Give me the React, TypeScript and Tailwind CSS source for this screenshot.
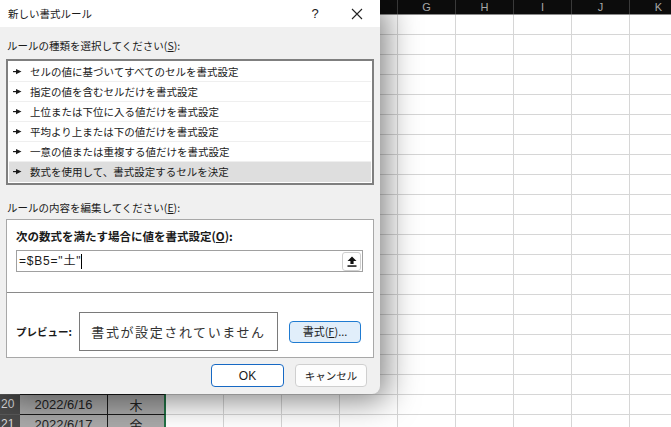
import React from 'react'

const cols = ['A', 'B', 'C', 'D', 'E', 'F', 'G', 'H', 'I', 'J', 'K']
const widths = [88, 58, 58, 58, 58, 58, 58, 58, 58, 58, 58]
const wd = ['日', '月', '火', '水', '木', '金', '土']

const rules = [
  'セルの値に基づいてすべてのセルを書式設定',
  '指定の値を含むセルだけを書式設定',
  '上位または下位に入る値だけを書式設定',
  '平均より上または下の値だけを書式設定',
  '一意の値または重複する値だけを書式設定',
  '数式を使用して、書式設定するセルを決定',
]

function Pointer() {
  return (
    <svg width="9" height="7" viewBox="0 0 9 7" className="shrink-0">
      <rect x="0" y="3" width="3.5" height="1.2" fill="#1a1a1a" />
      <path d="M3 1 L8.5 3.6 L3 6.2 Z" fill="#1a1a1a" />
    </svg>
  )
}

function Sheet() {
  const rows = Array.from({ length: 21 }, (_, i) => i + 1)
  return (
    <div className="absolute inset-0 bg-white font-['Liberation_Sans','Noto_Sans_CJK_JP',sans-serif]">
      <div className="flex h-[15px] bg-[#0c0c0c] border-b border-[#8a8a8a]">
        <div className="w-[20px] shrink-0" />
        {cols.map((c, i) => (
          <div
            key={c}
            style={{ width: widths[i] }}
            className="shrink-0 border-r border-[#3a3a3a] text-[11px] leading-[14px] text-center text-[#a8a8a8]"
          >
            {i >= 6 ? c : ''}
          </div>
        ))}
      </div>
      {rows.map((r) => {
        const data = r >= 5
        // only the rows below the dialog are visible
        const shown = r >= 20
        const day = r - 4
        return (
          <div key={r} className="flex h-[20px]">
            <div className="w-[20px] shrink-0 bg-[#4a4a4a] border-b border-[#5a5a5a] text-[12px] leading-[19px] text-[#dcdcdc] pl-[1px]">
              {shown ? r : ''}
            </div>
            {cols.map((c, i) => {
              if (data && i === 0)
                return (
                  <div key={c} className="w-[88px] shrink-0 bg-[#a9a9a9] border-r border-b border-[#1a1a1a] text-[13px] leading-[19px] text-center text-[#222]">
                    {shown ? `2022/6/${day}` : ''}
                  </div>
                )
              if (data && i === 1)
                return (
                  <div key={c} className="w-[58px] shrink-0 bg-[#a9a9a9] border-b border-[#1a1a1a] border-r-2 border-r-[#217346] text-[13px] leading-[19px] text-center text-[#222] font-['Noto_Sans_CJK_JP',sans-serif]">
                    {shown ? wd[(2 + day) % 7] : ''}
                  </div>
                )
              return (
                <div
                  key={c}
                  style={{ width: widths[i] }}
                  className="shrink-0 border-r border-b border-[#d6d6d6]"
                />
              )
            })}
          </div>
        )
      })}
    </div>
  )
}

function Dialog() {
  return (
    <div className="absolute left-0 top-0 w-[380px] h-[394px] bg-[#f0f0f0] rounded-br-[8px] shadow-[6px_6px_32px_rgba(0,0,0,0.5)] overflow-hidden font-['Noto_Sans_CJK_JP',sans-serif] text-[#1a1a1a]">
      <div className="h-[27px] bg-white flex items-center pl-[8px]">
        <span className="text-[10.5px]">新しい書式ルール</span>
        <span className="ml-auto w-[14px] text-center text-[13px] font-['Liberation_Sans',sans-serif]">?</span>
        <svg width="12" height="12" viewBox="0 0 12 12" className="ml-[29px] mr-[17px]">
          <path d="M1 1 L11 11 M11 1 L1 11" stroke="#222" strokeWidth="1.1" />
        </svg>
      </div>
      <div className="px-[6px]">
        <div className="pt-[11px] pl-[1px] h-[27px] text-[10.5px] leading-[16px]">
          ルールの種類を選択してください(<span className="underline">S</span>):
        </div>
        <div className="mt-[5px] h-[126px] border-2 border-[#7f7f7f] bg-white p-[1px]">
          {rules.map((t, i) => (
            <div
              key={t}
              className={`h-[20px] flex items-center pl-[4px] border-b ${i === 5 ? 'bg-[#dedede] border-[#dedede]' : 'border-[#efefef]'}`}
            >
              <Pointer />
              <span className="ml-[8px] text-[10.5px] leading-[16px]">{t}</span>
            </div>
          ))}
        </div>
        <div className="mt-[15px] pl-[1px] h-[16px] text-[10.5px] leading-[16px]">
          ルールの内容を編集してください(<span className="underline">E</span>):
        </div>
        <div className="mt-[3px] h-[139px] border border-[#a8a8a8] bg-white">
          <div className="h-[73px] border-b border-[#8a8a8a] px-[9px] pt-[8px]">
            <div className="h-[16px] text-[11.5px] leading-[16px] font-bold">
              次の数式を満たす場合に値を書式設定(<span className="underline">O</span>):
            </div>
            <div className="mt-[6px] w-[347px] h-[22px] border border-[#a0a0a0] flex items-center pl-[2px] pr-[1px]">
              <span className="text-[12px] font-['Liberation_Sans','Noto_Sans_CJK_JP',sans-serif] tracking-[0.8px]">
                =$B5="土"
              </span>
              <span className="w-[1px] h-[15px] bg-black" />
              <div className="ml-auto w-[19px] h-[19px] border border-[#cfcfcf] rounded-[3px] flex items-center justify-center bg-white">
                <svg width="10" height="11" viewBox="0 0 10 11">
                  <path d="M5 0.5 L9.5 5 L6.6 5 L6.6 8 L3.4 8 L3.4 5 L0.5 5 Z" fill="#111" />
                  <rect x="0.5" y="9.3" width="9" height="1.5" fill="#111" />
                </svg>
              </div>
            </div>
          </div>
          <div className="flex items-center pl-[9px] pt-[19px]">
            <span className="w-[63px] text-[10.5px] font-bold">プレビュー:</span>
            <div className="w-[199px] h-[39px] border border-[#7a7a7a] flex items-center justify-center text-[13px] tracking-[1.6px] text-[#333]">
              書式が設定されていません
            </div>
            <div className="ml-[11px] w-[72px] h-[22px] bg-[#e1eefa] border border-[#1f7bd1] rounded-[4px] flex items-center justify-center text-[11px]">
              書式(<span className="underline">F</span>)...
            </div>
          </div>
        </div>
        <div className="mt-[6px] flex justify-end gap-[11px] pr-[7px]">
          <div className="w-[73px] h-[23px] bg-white border border-[#1769c4] rounded-[4px] flex items-center justify-center text-[12px] font-['Liberation_Sans',sans-serif]">
            OK
          </div>
          <div className="w-[72px] h-[23px] bg-[#fdfdfd] border border-[#cfcfcf] rounded-[4px] flex items-center justify-center text-[10.5px]">
            キャンセル
          </div>
        </div>
      </div>
    </div>
  )
}

export default function App() {
  return (
    <div className="relative w-[671px] h-[427px] overflow-hidden bg-white">
      <Sheet />
      <Dialog />
    </div>
  )
}
